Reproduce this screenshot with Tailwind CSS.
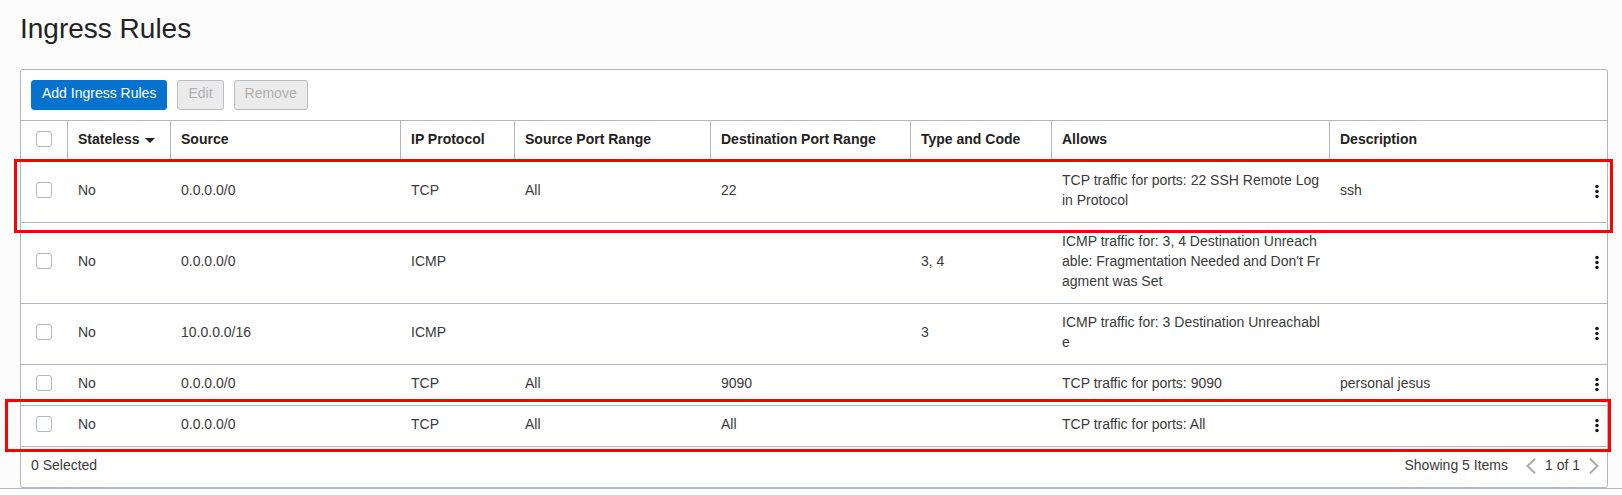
<!DOCTYPE html>
<html lang="en">
<head>
<meta charset="utf-8">
<title>Ingress Rules</title>
<script src="https://cdn.jsdelivr.net/npm/@tailwindcss/browser@4"></script>
</head>
<body class="bg-[#fcfcfc] font-['Liberation_Sans',Arial,sans-serif] text-sm leading-5 text-[#3a3a3a]">
<svg class="hidden">
  <symbol id="kebab" viewBox="0 0 4 20"><g fill="#111"><circle cx="2" cy="6.5" r="1.7"/><circle cx="2" cy="11.5" r="1.7"/><circle cx="2" cy="16.5" r="1.7"/></g></symbol>
</svg>
<main class="border-b border-[#b1b6bf] pt-[11px]">
  <h1 class="mx-5 mb-[22px] text-[28px] leading-9 text-[#222]">Ingress Rules</h1>
  <section class="ml-5 mr-[14px] rounded-[3px] border border-[#b1b6bf] bg-white">
    <div class="flex gap-[10px] p-[10px]">
      <button class="h-[30px] rounded-[3px] border border-[#0572ce] bg-[#0572ce] px-[10px] pb-1 text-white">Add Ingress Rules</button>
      <button disabled class="h-[30px] rounded-[3px] border border-[#b9bcc2] bg-[#ebebeb] px-[10px] pb-1 text-[#b0b0b0]">Edit</button>
      <button disabled class="h-[30px] rounded-[3px] border border-[#b9bcc2] bg-[#ebebeb] px-[10px] pb-1 text-[#b0b0b0]">Remove</button>
    </div>
    <table class="w-full table-fixed border-separate border-spacing-0 text-left [&_td]:border-b [&_td]:border-[#b1b6bf] [&_td]:px-[10px] [&_td]:pt-2 [&_td]:pb-3 [&_th]:border-y [&_th]:border-[#b1b6bf] [&_th]:px-[10px] [&_th]:pt-2 [&_th]:pb-3 [&_th]:text-[#222] [&_input]:block [&_input]:ml-[5px] [&_input]:size-4 [&_input]:appearance-none [&_input]:rounded-[3px] [&_input]:border [&_input]:border-[#b1b6bf] [&_input]:bg-white">
      <colgroup><col class="w-[47px]"><col class="w-[103px]"><col class="w-[230px]"><col class="w-[114px]"><col class="w-[196px]"><col class="w-[200px]"><col class="w-[141px]"><col class="w-[278px]"><col><col class="w-8"></colgroup>
      <thead>
        <tr>
          <th scope="col" class="border-r"><input type="checkbox" aria-label="Select all rules"></th>
          <th scope="col" class="border-r" aria-sort="descending"><button class="flex items-center gap-[6px] font-bold">Stateless<svg class="mt-[2px] h-[5px] w-[10px]" viewBox="0 0 10 5"><path d="M0 0h10L5 5z" fill="#222"/></svg></button></th>
          <th scope="col" class="border-r">Source</th>
          <th scope="col" class="border-r">IP Protocol</th>
          <th scope="col" class="border-r">Source Port Range</th>
          <th scope="col" class="border-r">Destination Port Range</th>
          <th scope="col" class="border-r">Type and Code</th>
          <th scope="col" class="border-r">Allows</th>
          <th scope="col" colspan="2">Description</th>
        </tr>
      </thead>
      <tbody>
        <tr class="relative">
          <td><input type="checkbox" aria-label="Select rule 1"></td><td>No</td><td>0.0.0.0/0</td><td>TCP</td><td>All</td><td>22</td><td></td>
          <td class="break-all">TCP traffic for ports: 22 SSH Remote Login Protocol</td><td>ssh</td>
          <td><button aria-label="Actions for rule 1" class="ml-[10px] block"><svg class="h-5 w-1"><use href="#kebab"/></svg></button>
            <span class="pointer-events-none absolute -top-[3px] -right-[6px] -bottom-[10px] -left-[7px] z-10 border-3 border-[#ff0000]"></span></td>
        </tr>
        <tr>
          <td><input type="checkbox" aria-label="Select rule 2"></td><td>No</td><td>0.0.0.0/0</td><td>ICMP</td><td></td><td></td><td>3, 4</td>
          <td class="break-all">ICMP traffic for: 3, 4 Destination Unreachable: Fragmentation Needed and Don't Fragment was Set</td><td></td>
          <td><button aria-label="Actions for rule 2" class="ml-[10px] block"><svg class="h-5 w-1"><use href="#kebab"/></svg></button></td>
        </tr>
        <tr>
          <td><input type="checkbox" aria-label="Select rule 3"></td><td>No</td><td>10.0.0.0/16</td><td>ICMP</td><td></td><td></td><td>3</td>
          <td class="break-all">ICMP traffic for: 3 Destination Unreachable</td><td></td>
          <td><button aria-label="Actions for rule 3" class="ml-[10px] block"><svg class="h-5 w-1"><use href="#kebab"/></svg></button></td>
        </tr>
        <tr>
          <td><input type="checkbox" aria-label="Select rule 4"></td><td>No</td><td>0.0.0.0/0</td><td>TCP</td><td>All</td><td>9090</td><td></td>
          <td class="break-all">TCP traffic for ports: 9090</td><td>personal jesus</td>
          <td><button aria-label="Actions for rule 4" class="ml-[10px] block"><svg class="h-5 w-1"><use href="#kebab"/></svg></button></td>
        </tr>
        <tr class="relative">
          <td><input type="checkbox" aria-label="Select rule 5"></td><td>No</td><td>0.0.0.0/0</td><td>TCP</td><td>All</td><td>All</td><td></td>
          <td class="break-all">TCP traffic for ports: All</td><td></td>
          <td><button aria-label="Actions for rule 5" class="ml-[10px] block"><svg class="h-5 w-1"><use href="#kebab"/></svg></button>
            <span class="pointer-events-none absolute -top-[7px] -right-1 -bottom-[5px] -left-4 z-10 border-3 border-[#ff0000]"></span></td>
        </tr>
      </tbody>
    </table>
    <div class="flex items-center px-[10px] pt-2 pb-3">
      <span>0 Selected</span>
      <span class="ml-auto mr-[18px]">Showing 5 Items</span>
      <nav class="-mr-[2px] flex items-center gap-[9px]" aria-label="Pages">
        <button aria-label="Previous page"><svg class="mt-[2px] h-4 w-[10px]" viewBox="0 0 10 16" fill="none" stroke="#aaa" stroke-width="2"><path d="M9 .7 1.5 8 9 15.3"/></svg></button>
        <span>1 of 1</span>
        <button aria-label="Next page"><svg class="mt-[2px] h-4 w-[10px]" viewBox="0 0 10 16" fill="none" stroke="#aaa" stroke-width="2"><path d="M1 .7 8.5 8 1 15.3"/></svg></button>
      </nav>
    </div>
  </section>
</main>
</body>
</html>
